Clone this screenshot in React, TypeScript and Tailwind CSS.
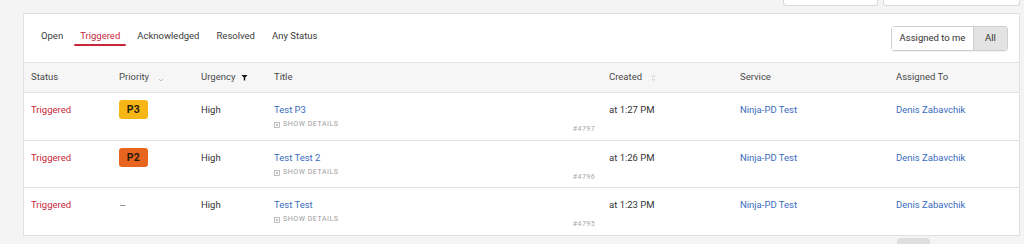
import React from "react";

type Incident = {
  priority: "P3" | "P2" | null;
  title: string;
  number: string;
  created: string;
};

const incidents: Incident[] = [
  { priority: "P3", title: "Test P3", number: "#4797", created: "at 1:27 PM" },
  { priority: "P2", title: "Test Test 2", number: "#4796", created: "at 1:26 PM" },
  { priority: null, title: "Test Test", number: "#4795", created: "at 1:23 PM" },
];

const cols = "grid grid-cols-[87px_82px_73px_335px_131px_156px_1fr]";

function PriorityBadge({ p }: { p: Incident["priority"] }) {
  if (!p) return <span className="text-[#555] pl-px">--</span>;
  const bg = p === "P3" ? "bg-[#f6b716]" : "bg-[#e8651f]";
  return (
    <span
      className={`${bg} inline-flex h-[19px] w-[29px] items-center justify-center rounded-[3px] text-[10.5px] font-bold tracking-[0.03em] text-[#2a1a08]`}
    >
      {p}
    </span>
  );
}

export default function App() {
  const tabs = ["Open", "Triggered", "Acknowledged", "Resolved", "Any Status"];
  return (
    <div
      className="h-[244px] w-[1024px] overflow-hidden bg-[#f4f4f4] text-[9.5px] text-[#3b3b3b]"
      style={{ fontFamily: "Roboto, 'Liberation Sans', sans-serif" }}
    >
      {/* tails of buttons above */}
      <div className="flex h-[6px] justify-end gap-[5px] pr-[4px]">
        <div className="w-[95px] rounded-b-[3px] border border-t-0 border-[#d9d9d9] bg-white" />
        <div className="w-[137px] rounded-b-[3px] border border-t-0 border-[#d9d9d9] bg-white" />
      </div>

      <div className="ml-[23px] mr-[4px] mt-[7px] border border-[#e0e0e0] bg-white">
        {/* tabs */}
        <div className="flex h-[49px] items-center justify-between border-b border-[#e3e3e3] pl-[16px] pr-[11px]">
          <div className="mb-[4px] flex items-center gap-[15px]">
            {tabs.map((t) => (
              <div key={t} className="relative px-[1px]">
                <span className={t === "Triggered" ? "text-[#c8283c]" : "text-[#3b3b3b]"}>{t}</span>
                {t === "Triggered" && (
                  <div className="absolute -left-[5px] -right-[5px] top-[15px] h-[2px] rounded-full bg-[#c8283c]" />
                )}
              </div>
            ))}
          </div>
          <div className="flex h-[25px] rounded-[3px] border border-[#cfcfcf] shadow-[0_1px_1px_rgba(0,0,0,0.06)]">
            <div className="flex w-[81px] items-center justify-center bg-white text-[#333]">Assigned to me</div>
            <div className="flex w-[34px] items-center justify-center border-l border-[#cfcfcf] bg-[#e3e3e3] text-[#333]">
              All
            </div>
          </div>
        </div>

        {/* header */}
        <div className={`${cols} h-[30px] items-center border-b border-[#e3e3e3] bg-[#f6f6f6] text-[#4a4a4a]`}>
          <div className="pl-[7px]">Status</div>
          <div className="flex items-center gap-[9px] pl-[8px]">
            Priority
            <svg width="6" height="6" viewBox="0 0 6 6" className="mt-[4px]">
              <path d="M1 2 L3 4 L5 2" fill="none" stroke="#b5b5b5" strokeWidth="0.8" />
            </svg>
          </div>
          <div className="flex items-center gap-[6px] pl-[8px]">
            Urgency
            <svg width="7" height="7" viewBox="0 0 8 8">
              <path d="M0.5 1 H7.5 L4.8 4 V7.5 H3.2 V4 Z" fill="#111" />
            </svg>
          </div>
          <div className="pl-[8px]">Title</div>
          <div className="flex items-center gap-[9px] pl-[8px]">
            Created
            <svg width="5" height="8" viewBox="0 0 5 8">
              <path d="M1 3 L2.5 1.5 L4 3 M1 5 L2.5 6.5 L4 5" fill="none" stroke="#bdbdbd" strokeWidth="0.8" />
            </svg>
          </div>
          <div className="pl-[8px]">Service</div>
          <div className="pl-[8px]">Assigned To</div>
        </div>

        {/* rows */}
        {incidents.map((inc, i) => (
          <div
            key={inc.number}
            className={`${cols} ${i === 0 ? "h-[48px]" : "h-[47px]"} ${
              i < incidents.length - 1 ? "border-b border-[#e3e3e3]" : ""
            } items-start`}
          >
            <div className="pl-[7px] pt-[10px] text-[#c8283c]">Triggered</div>
            <div className={`pl-[8px] ${inc.priority ? "pt-[7px]" : "pt-[10px]"}`}>
              <PriorityBadge p={inc.priority} />
            </div>
            <div className="pl-[8px] pt-[10px] text-[#333]">High</div>
            <div className="flex h-full justify-between pl-[8px] pr-[6px]">
              <div className="flex flex-col pt-[10px]">
                <span className="text-[#3a6cc0]">{inc.title}</span>
                <span className="mt-[2px] flex items-center gap-[3px] text-[7px] tracking-[0.08em] text-[#9a9a9a]">
                  <svg width="6" height="6" viewBox="0 0 6 6">
                    <rect x="0.4" y="0.4" width="5.2" height="5.2" fill="none" stroke="#a5a5a5" strokeWidth="0.7" />
                    <path d="M1.6 3 H4.4 M3 1.6 V4.4" stroke="#a5a5a5" strokeWidth="0.7" />
                  </svg>
                  SHOW DETAILS
                </span>
              </div>
              <span className="pt-[31px] text-[7px] tracking-[0.06em] text-[#a8a8a8]">{inc.number}</span>
            </div>
            <div className="pl-[8px] pt-[10px] text-[#333]">{inc.created}</div>
            <div className="pl-[8px] pt-[10px] text-[#3a6cc0]">Ninja-PD Test</div>
            <div className="pl-[8px] pt-[10px] text-[#3a6cc0]">Denis Zabavchik</div>
          </div>
        ))}
      </div>

      {/* pagination tops */}
      <div className="mt-[2px] flex justify-end pr-[94px]">
        <div className="h-[8px] w-[33px] rounded-t-[4px] bg-[#dedede]" />
      </div>
    </div>
  );
}
